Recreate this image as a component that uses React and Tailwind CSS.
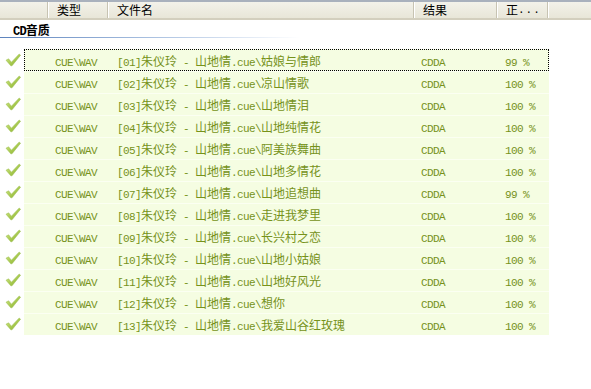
import React from "react";

const tracks = [
  { name: "姑娘与情郎", pct: "99" },
  { name: "凉山情歌", pct: "100" },
  { name: "山地情泪", pct: "100" },
  { name: "山地纯情花", pct: "100" },
  { name: "阿美族舞曲", pct: "100" },
  { name: "山地多情花", pct: "100" },
  { name: "山地追想曲", pct: "99" },
  { name: "走进我梦里", pct: "100" },
  { name: "长兴村之恋", pct: "100" },
  { name: "山地小姑娘", pct: "100" },
  { name: "山地好风光", pct: "100" },
  { name: "想你", pct: "100" },
  { name: "我爱山谷红玫瑰", pct: "100" },
];

// ASCII runs in a narrow mono face, CJK runs in Noto at 12px (like SimSun widths)
const Mixed = ({ text }) => {
  const parts = text.match(/[\x00-\x7f]+|[^\x00-\x7f]+/g) || [];
  return (
    <>
      {parts.map((p, i) =>
        /^[\x00-\x7f]/.test(p) ? (
          <span key={i} className="font-['Liberation_Mono',monospace] text-[11px] tracking-[-0.6px] whitespace-pre">
            {p}
          </span>
        ) : (
          <span key={i} className="font-['Noto_Sans_CJK_SC',sans-serif] text-[12px]">
            {p}
          </span>
        )
      )}
    </>
  );
};

const Check = () => (
  <svg width="18" height="16" viewBox="0 0 18 16">
    <defs>
      <linearGradient id="ck" x1="0" y1="0" x2="1" y2="1">
        <stop offset="0" stopColor="#d6ea8c" />
        <stop offset="0.6" stopColor="#a3c64a" />
        <stop offset="1" stopColor="#7ea62a" />
      </linearGradient>
    </defs>
    <path
      d="M2 8.2 L4.6 6.8 L7.4 10.2 L15.2 2 L16.6 3.2 L8 13.8 L6.8 13.8 Z"
      fill="url(#ck)"
      stroke="#98bc4a"
      strokeWidth="0.5"
      strokeLinejoin="round"
    />
  </svg>
);

const HeaderCell = ({ w, children }) => (
  <div className={`${w} h-full flex items-center border-r border-[#c7c3b2] shadow-[1px_0_0_#fff] pl-[9px] text-[12px] text-black font-['Noto_Sans_CJK_SC',sans-serif] leading-none`}>
    {children}
  </div>
);

export default function App() {
  return (
    <div className="w-[591px] h-[389px] bg-white overflow-hidden">
      {/* column header */}
      <div className="h-[20px] flex border-t-2 border-[#a9b1bd] bg-gradient-to-b from-[#f3f2ea] to-[#e8e6d8] border-b-2 border-b-[#d3cfbe]">
        <div className="w-[48px] h-full border-r border-[#c7c3b2] shadow-[1px_0_0_#fff]" />
        <HeaderCell w="w-[60px]">类型</HeaderCell>
        <HeaderCell w="w-[306px]">文件名</HeaderCell>
        <HeaderCell w="w-[83px]">结果</HeaderCell>
        <HeaderCell w="w-[51px]">
          正<span className="font-['Liberation_Mono',monospace] text-[11px] tracking-[1px]">...</span>
        </HeaderCell>
        <div className="flex-1" />
      </div>

      {/* group */}
      <div className="pl-[13px] pt-[4px] h-[17px] text-[12px] font-bold text-black leading-none">
        <span className="font-['Liberation_Mono',monospace] text-[12px] tracking-[-0.8px]">CD</span>
        <span className="font-['Noto_Sans_CJK_SC',sans-serif]">音质</span>
      </div>
      <div className="h-[1px] w-[300px] bg-gradient-to-r from-[#5d83bd] via-[#a9c0e0] to-white" />

      <div className="mt-[11px] flex flex-col">
        {tracks.map((t, i) => (
          <div key={i} className="flex h-[22px]">
            <div className="w-[24px] flex items-center justify-center pl-[2px]">
              <Check />
            </div>
            <div
              className={`w-[525px] flex items-center text-[#76921a] bg-[#f5fde2] leading-none ${
                i === 0 ? "border border-dotted border-black" : "border-t border-[#fbfff2]"
              }`}
            >
              <div className={`${i === 0 ? "w-[30px]" : "w-[31px]"}`} />
              <div className="w-[62px]">
                <Mixed text="CUE\WAV" />
              </div>
              <div className="w-[304px]">
                <Mixed text={`[${String(i + 1).padStart(2, "0")}]朱仪玲 - 山地情.cue\\${t.name}`} />
              </div>
              <div className="w-[84px]">
                <Mixed text="CDDA" />
              </div>
              <div>
                <Mixed text={`${t.pct} %`} />
              </div>
            </div>
          </div>
        ))}
      </div>
    </div>
  );
}
